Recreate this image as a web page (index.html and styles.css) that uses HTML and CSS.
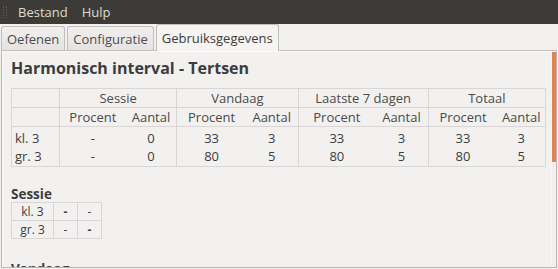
FILE: index.html
```html
<!DOCTYPE html>
<html lang="nl">
<head>
    <meta charset="UTF-8">
    <title>Gebruiksgegevens</title>
    <link rel="stylesheet" href="styles.css">
</head>
<body>
    <div class="menubar">
        <span class="grip"></span>
        <span class="menu-item">Bestand</span>
        <span class="menu-item">Hulp</span>
    </div>
    <div class="tabs">
        <div class="tab">Oefenen</div>
        <div class="tab">Configuratie</div>
        <div class="tab active">Gebruiksgegevens</div>
    </div>
    <div class="panel">
        <div class="content">
            <h1>Harmonisch interval - Tertsen</h1>
            <table class="stats">
                <colgroup><col class="c-name"></colgroup>
                <colgroup><col class="c-p1"><col class="c-a1"></colgroup>
                <colgroup><col class="c-p2"><col class="c-a2"></colgroup>
                <colgroup><col class="c-p3"><col class="c-a3"></colgroup>
                <colgroup><col class="c-p4"><col class="c-a4"></colgroup>
                <thead>
                    <tr>
                        <th></th>
                        <th colspan="2" class="grp">Sessie</th>
                        <th colspan="2" class="grp">Vandaag</th>
                        <th colspan="2" class="grp">Laatste 7 dagen</th>
                        <th colspan="2" class="grp">Totaal</th>
                    </tr>
                    <tr>
                        <th></th>
                        <th class="grp">Procent</th><th>Aantal</th>
                        <th class="grp">Procent</th><th>Aantal</th>
                        <th class="grp">Procent</th><th>Aantal</th>
                        <th class="grp">Procent</th><th>Aantal</th>
                    </tr>
                </thead>
                <tbody>
                    <tr class="first">
                        <td class="name">kl. 3</td>
                        <td class="grp">-</td><td>0</td>
                        <td class="grp">33</td><td>3</td>
                        <td class="grp">33</td><td>3</td>
                        <td class="grp">33</td><td>3</td>
                    </tr>
                    <tr class="last">
                        <td class="name">gr. 3</td>
                        <td class="grp">-</td><td>0</td>
                        <td class="grp">80</td><td>5</td>
                        <td class="grp">80</td><td>5</td>
                        <td class="grp">80</td><td>5</td>
                    </tr>
                </tbody>
            </table>

            <h2>Sessie</h2>
            <table class="mini">
                <tr><td class="name">kl. 3</td><td class="dash"><b>-</b></td><td class="dash">-</td></tr>
                <tr><td class="name">gr. 3</td><td class="dash">-</td><td class="dash"><b>-</b></td></tr>
            </table>

            <h2>Vandaag</h2>
        </div>
        <div class="scrollbar"><div class="thumb"></div></div>
    </div>
</body>
</html>
```

FILE: styles.css
```css
body {
    margin: 0;
    height: 269px;
    overflow: hidden;
    background-color: #f2f1f0;
    font-family: "Open Sans", "Noto Sans", sans-serif;
    color: #3c3c3c;
}
.menubar {
    height: 24px;
    background-color: #3c3b37;
    display: flex;
    align-items: center;
    font-size: 13px;
    color: #dfdbd2;
}
.grip {
    width: 4px;
    height: 12px;
    margin: 0 4px 0 3px;
    border-left: 1px dotted #5a5954;
    border-right: 1px dotted #5a5954;
    box-sizing: border-box;
}
.menu-item {
    padding: 0 7px 1px 7px;
}
.tabs {
    display: flex;
    align-items: flex-end;
    gap: 2px;
    height: 26px;
    padding-left: 1px;
}
.tab {
    height: 24px;
    line-height: 24px;
    padding: 0 5px;
    box-sizing: border-box;
    border: 1px solid #c1bdb8;
    border-bottom: none;
    border-radius: 3px 3px 0 0;
    background: linear-gradient(#f1f0ef, #e5e3e1);
    font-size: 13px;
    color: #4c4c4c;
}
.tab.active {
    height: 27px;
    line-height: 26px;
    margin-bottom: -1px;
    background: #f5f4f3;
    color: #3c3c3c;
    position: relative;
    z-index: 1;
}
.panel {
    display: flex;
    height: 216px;
    margin: 0 1px 0 1px;
    border: 1px solid #bab6b1;
    border-top-color: #c1bdb8;
    box-shadow: inset 1px 1px 0 #fbfbfa;
}
.content {
    flex: 1;
    overflow: hidden;
    padding: 6px 0 0 9px;
}
h1 {
    margin: 0 0 9px 0;
    font-size: 16px;
    font-weight: bold;
    line-height: 22px;
    color: #3c3c3c;
}
h2 {
    margin: 0;
    font-size: 13.5px;
    font-weight: bold;
    line-height: 16px;
    color: #3c3c3c;
}
.stats {
    width: 535px;
    border-collapse: collapse;
    border: 1px solid #d9d7d5;
    font-size: 13px;
    margin-bottom: 19px;
}
.stats th {
    font-weight: normal;
    height: 17px;
    padding: 0;
    border-bottom: 1px solid #d9d7d5;
    text-align: center;
    color: #4a4a4a;
}
.stats td {
    height: 17px;
    padding: 0;
    text-align: center;
}
.stats .first td {
    padding-top: 2px;
}
.stats .last td {
    padding-bottom: 1px;
}
.stats .grp {
    border-left: 1px solid #d9d7d5;
}
.stats td.name {
    text-align: left;
    padding-left: 3px;
}
.c-name { width: 48px; }
.c-p1 { width: 66px; }
.c-a1 { width: 51px; }
.c-p2 { width: 69px; }
.c-a2 { width: 52px; }
.c-p3 { width: 77px; }
.c-a3 { width: 53px; }
.c-p4 { width: 69px; }
.c-a4 { width: 48px; }
.mini {
    border-collapse: collapse;
    border: 1px solid #d9d7d5;
    font-size: 12px;
    margin-bottom: 22px;
}
.mini td {
    height: 17px;
    padding: 0;
    border: 1px solid #d9d7d5;
    text-align: center;
}
.mini td.name {
    width: 41px;
}
.mini td.dash {
    width: 23px;
}
.scrollbar {
    width: 4px;
    border-left: 1px solid #f8f7f6;
    padding-top: 1px;
}
.thumb {
    height: 110px;
    background-color: #df8454;
}
```
